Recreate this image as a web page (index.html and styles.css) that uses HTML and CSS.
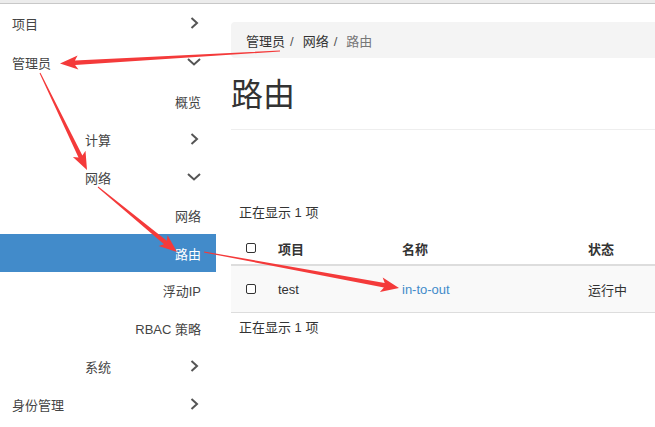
FILE: index.html
```html
<!DOCTYPE html>
<html lang="zh-CN">
<head>
<meta charset="utf-8">
<title>路由</title>
<link rel="stylesheet" href="styles.css">
</head>
<body>
<div class="topbar"></div>
<div class="layout">
  <nav class="sidebar">
    <div class="nav-item lvl0 h38"><span>项目</span><svg class="chev" width="14" height="12" viewBox="0 0 14 12"><polyline points="4.5,1 10,6 4.5,11"/></svg></div>
    <div class="nav-item lvl0 h40"><span>管理员</span><svg class="chev" width="14" height="12" viewBox="0 0 14 12"><polyline points="1,3 7,8.5 13,3"/></svg></div>
    <div class="nav-item leaf"><span>概览</span></div>
    <div class="nav-item lvl1"><span>计算</span><svg class="chev" width="14" height="12" viewBox="0 0 14 12"><polyline points="4.5,1 10,6 4.5,11"/></svg></div>
    <div class="nav-item lvl1"><span>网络</span><svg class="chev" width="14" height="12" viewBox="0 0 14 12"><polyline points="1,3 7,8.5 13,3"/></svg></div>
    <div class="nav-item leaf"><span>网络</span></div>
    <div class="nav-item leaf active"><span>路由</span></div>
    <div class="nav-item leaf h37"><span>浮动IP</span></div>
    <div class="nav-item leaf"><span>RBAC 策略</span></div>
    <div class="nav-item lvl1"><span>系统</span><svg class="chev" width="14" height="12" viewBox="0 0 14 12"><polyline points="4.5,1 10,6 4.5,11"/></svg></div>
    <div class="nav-item lvl0"><span>身份管理</span><svg class="chev" width="14" height="12" viewBox="0 0 14 12"><polyline points="4.5,1 10,6 4.5,11"/></svg></div>
  </nav>
  <main class="main">
    <ol class="breadcrumb">
      <li>管理员</li>
      <li>网络</li>
      <li class="current">路由</li>
    </ol>
    <div class="page-header"><h1>路由</h1></div>
    <div class="count">正在显示 1 项</div>
    <div class="table">
      <div class="row head">
        <div class="cell chk"><span class="box"></span></div>
        <div class="cell">项目</div>
        <div class="cell">名称</div>
        <div class="cell">状态</div>
      </div>
      <div class="row body">
        <div class="cell chk"><span class="box"></span></div>
        <div class="cell">test</div>
        <div class="cell"><a class="link" href="#">in-to-out</a></div>
        <div class="cell">运行中</div>
      </div>
    </div>
    <div class="count foot">正在显示 1 项</div>
  </main>
</div>
<svg class="arrows" width="655" height="427" viewBox="0 0 655 427">
  <polygon points="280,50.5 74.9,60.5 77.6,55.5 60,63.5 78.4,69.5 75.1,64.9 280,51.5"/>
  <polygon points="39.55,73.2 78.5,157.5 72.9,156.9 87,170 85.5,150.8 82.4,155.5 40.45,72.8"/>
  <polygon points="97.7,187.4 164,244.2 158.7,246 177,252 167.6,235.2 166.8,240.8 98.3,186.6"/>
  <polygon points="203.9,252.5 383.9,287.4 379.9,292.1 399,288 382.7,277.4 384.7,283.1 204.1,251.5"/>
</svg>
</body>
</html>
```

FILE: styles.css
```css
* { box-sizing: border-box; }
html, body {
  margin: 0;
  padding: 0;
  background: #fff;
  overflow: hidden;
}
body {
  width: 655px;
  height: 427px;
  position: relative;
  font-family: "Liberation Sans", "Noto Sans CJK SC", sans-serif;
  font-size: 13px;
  color: #333;
}
.topbar {
  height: 4px;
  background: #ececec;
  border-bottom: 1px solid #c8c8c8;
}
.layout {
  display: flex;
}
.sidebar {
  width: 216px;
  flex: none;
  color: #444;
}
.nav-item {
  display: flex;
  align-items: center;
  justify-content: space-between;
  height: 38px;
  padding: 0 15px 0 12px;
}
.nav-item.h37 { height: 37px; }
.nav-item.h38 { height: 38px; }
.nav-item.h40 { height: 40px; }
.nav-item.lvl1 { padding-left: 85px; }
.nav-item.leaf { justify-content: flex-end; }
.nav-item.active {
  background: #428bca;
  color: #fff;
}
.chev {
  display: block;
  fill: none;
  stroke: #555;
  stroke-width: 2;
}
.main {
  flex: 1;
  min-width: 0;
  margin-left: 15px;
  padding-top: 18px;
}
.breadcrumb {
  list-style: none;
  margin: 0;
  height: 36px;
  padding: 0 15px;
  display: flex;
  align-items: center;
  background: #f4f4f4;
  border-radius: 4px 0 0 4px;
}
.breadcrumb li + li::before {
  content: "/";
  padding: 0 9px 0 5px;
  color: #555;
}
.breadcrumb .current { color: #777; }
.page-header {
  margin-top: 17px;
  padding-bottom: 14px;
  border-bottom: 1px solid #eee;
}
.page-header h1 {
  margin: 0;
  font-size: 32px;
  line-height: 40px;
  font-weight: normal;
  color: #333;
}
.count {
  margin-top: 74px;
  padding-left: 8px;
  line-height: 18px;
}
.count.foot { margin-top: 6px; }
.table {
  margin-top: 10px;
}
.row {
  display: grid;
  grid-template-columns: 39px 124px 186px 1fr;
  align-items: center;
}
.row.head {
  height: 34px;
  font-weight: bold;
  border-bottom: 2px solid #ddd;
}
.row.body {
  height: 47px;
  background: #f9f9f9;
  border-bottom: 1px solid #ddd;
}
.cell { padding-left: 8px; }
.cell.chk { padding-left: 15px; display: flex; }
.box {
  width: 10px;
  height: 10px;
  border: 1px solid #333;
  border-radius: 2px;
  background: #fff;
}
.link {
  color: #428bca;
  text-decoration: none;
}
.arrows {
  position: absolute;
  left: 0;
  top: 0;
  pointer-events: none;
  fill: #f43a3a;
}
```
